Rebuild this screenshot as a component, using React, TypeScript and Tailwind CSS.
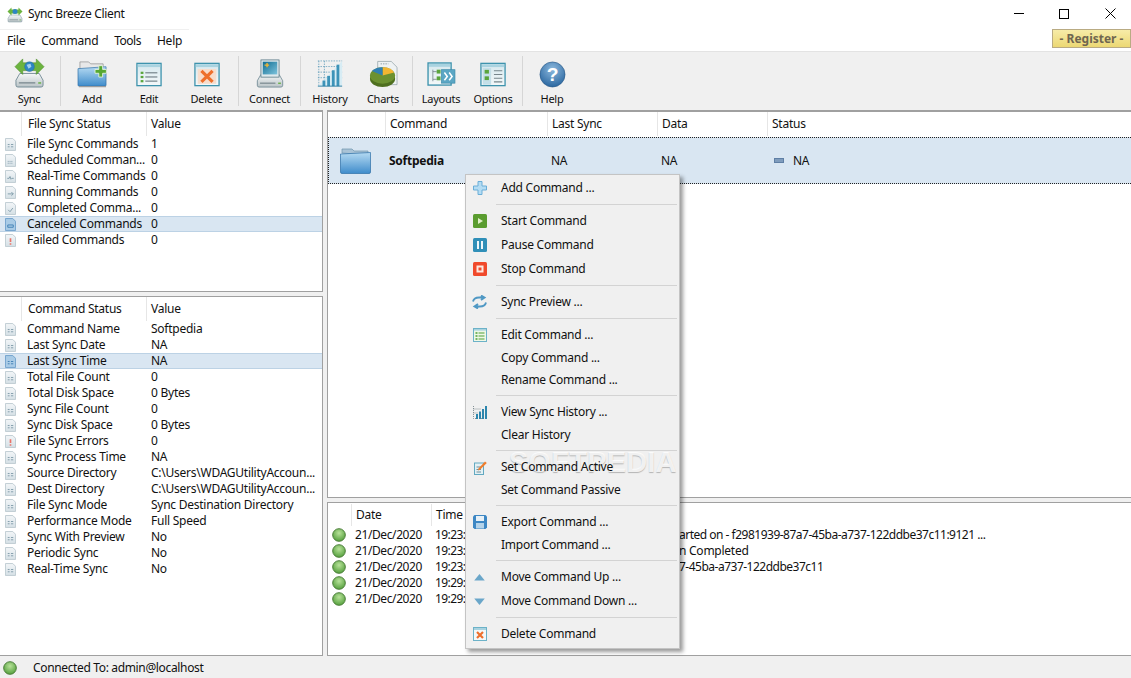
import React from 'react';

const Defs = () => (
  <svg width="0" height="0" className="absolute">
    <defs>
      <linearGradient id="blue" x1="0" y1="0" x2="0" y2="1">
        <stop offset="0" stopColor="#b5daf2" />
        <stop offset="1" stopColor="#3f8ccb" />
      </linearGradient>
      <linearGradient id="drive" x1="0" y1="0" x2="0" y2="1">
        <stop offset="0" stopColor="#f6f8f8" />
        <stop offset="1" stopColor="#b9c3c6" />
      </linearGradient>
      <linearGradient id="win" x1="0" y1="0" x2="0" y2="1">
        <stop offset="0" stopColor="#d5e8ee" />
        <stop offset="1" stopColor="#f4f8f9" />
      </linearGradient>
      <linearGradient id="screen" x1="0" y1="0" x2="1" y2="1">
        <stop offset="0" stopColor="#0f6d92" />
        <stop offset="1" stopColor="#7dc3dc" />
      </linearGradient>
      <linearGradient id="sheet" x1="0" y1="0" x2="0" y2="1">
        <stop offset="0" stopColor="#f3f6f8" />
        <stop offset="1" stopColor="#d5e0e6" />
      </linearGradient>
      <radialGradient id="sphere" cx="0.5" cy="0.3" r="0.8">
        <stop offset="0" stopColor="#8db9de" />
        <stop offset="1" stopColor="#1c5b97" />
      </radialGradient>
      <radialGradient id="led" cx="0.5" cy="0.35" r="0.7">
        <stop offset="0" stopColor="#b8e29a" />
        <stop offset="1" stopColor="#4c9a35" />
      </radialGradient>
    </defs>
  </svg>
);

const Drive = () => (
  <>
    <path d="M6 17 L26 17 L30 24 L30 29 Q30 31 28 31 L4 31 Q2 31 2 29 L2 24 Z" fill="url(#drive)" stroke="#5d7a86" strokeWidth="0.8" />
    <rect x="5" y="26" width="17" height="1.4" fill="#7e8c92" />
    <rect x="25" y="26" width="3" height="1.6" fill="#6eb24d" />
  </>
);

const SyncIcon = () => (
  <svg width="31" height="31" viewBox="0 0 32 32">
    <Drive />
    <path d="M1 10 L9 2 L9 6 L23 6 L23 2 L31 10 L23 18 L23 14 L9 14 L9 18 Z" fill="#6cb43f" stroke="#4f8f2d" strokeWidth="0.6" />
    <circle cx="16" cy="10" r="5" fill="#2e86c4" stroke="#1f6aa3" strokeWidth="0.5" />
    <path d="M13 8 L17 7 L18 10 L15 12 Z" fill="#9fd0ee" />
  </svg>
);

const AddIcon = () => (
  <svg width="31" height="29" viewBox="0 0 32 30">
    <path d="M3 12 L3 3 L12 3 L14 5 L27 5 L27 12 Z" fill="#e8e8e8" stroke="#8a8a8a" strokeWidth="0.7" />
    <path d="M1 10 L30 8 L30 27 Q30 28 29 28 L2 28 Q1 28 1 27 Z" fill="url(#blue)" stroke="#2d6ea6" strokeWidth="0.7" />
    <rect x="2" y="28" width="28" height="1.2" fill="#9a9a9a" />
    <path d="M19 8 L23 8 L23 4 L27 4 L27 8 L31 8 L31 12 L27 12 L27 16 L23 16 L23 12 L19 12 Z" transform="translate(0 3) scale(0.98)" fill="#56a832" stroke="#e9f5df" strokeWidth="0.9" />
  </svg>
);

const WinFrame = ({ children }: { children: React.ReactNode }) => (
  <svg width="26" height="25" viewBox="0 0 28 26" className="mb-[1px]">
    <rect x="1" y="1" width="26" height="24" fill="url(#win)" stroke="#3e93ad" strokeWidth="1.4" />
    <rect x="2" y="2" width="24" height="3" fill="#a9d3e0" />
    {children}
  </svg>
);

const EditIcon = () => (
  <WinFrame>
    <rect x="5" y="10" width="3" height="2.4" fill="#5aa53c" />
    <rect x="5" y="14.5" width="3" height="2.4" fill="#5aa53c" />
    <rect x="5" y="19" width="3" height="2.4" fill="#5aa53c" />
    <rect x="10" y="10.5" width="13" height="1.3" fill="#77868c" />
    <rect x="10" y="15" width="13" height="1.3" fill="#77868c" />
    <rect x="10" y="19.5" width="13" height="1.3" fill="#77868c" />
  </WinFrame>
);

const DeleteIcon = () => (
  <WinFrame>
    <rect x="4" y="7" width="20" height="16" fill="#f7dccb" />
    <path d="M8 9 L20 21 M20 9 L8 21" stroke="#ee6f2c" strokeWidth="3.4" fill="none" />
  </WinFrame>
);

const ConnectIcon = () => (
  <svg width="30" height="29" viewBox="0 0 32 32">
    <Drive />
    <rect x="6" y="1" width="20" height="19" fill="#dfe9ec" stroke="#4d6f7c" strokeWidth="0.8" />
    <rect x="8" y="3" width="16" height="14" fill="url(#screen)" />
    <path d="M10 6 L12 6 L12 4.5 L13.5 4.5 L13.5 6 L15 6 L15 7.5 L13.5 7.5 L13.5 9 L12 9 L12 7.5 L10 7.5 Z" fill="#f2b632" />
  </svg>
);

const HistoryIcon = () => (
  <svg width="28" height="28" viewBox="0 0 28 30">
    <g stroke="#4a8fb0" strokeWidth="0.7" strokeDasharray="1.6 1.2" fill="none">
      <path d="M1 1 L27 1 M1 7 L27 7 M1 13 L27 13 M1 19 L27 19 M2 1 L2 28 M8 1 L8 28" />
    </g>
    <path d="M1 28 L27 1 L27 28 Z" fill="#d7ecf4" />
    <rect x="6" y="22" width="3" height="6" fill="#3d93b8" />
    <rect x="11" y="17" width="3" height="11" fill="#3d93b8" />
    <rect x="16" y="11" width="3" height="17" fill="#3d93b8" />
    <rect x="21" y="5" width="3" height="23" fill="#3d93b8" />
    <path d="M1 28 L27 28" stroke="#2b7ea3" strokeWidth="1" />
  </svg>
);

const ChartsIcon = () => (
  <svg width="29" height="28" viewBox="0 0 30 28">
    <path d="M9 1 L23 1 L29 7 L29 25 L9 25 Z" fill="#eef2f3" stroke="#8a9aa0" strokeWidth="0.7" />
    <path d="M12 3.5 L20 3.5" stroke="#7a8a90" strokeWidth="0.8" strokeDasharray="1.5 1" />
    <ellipse cx="14" cy="19" rx="13" ry="8.5" fill="#4f6f1f" />
    <ellipse cx="14" cy="15.5" rx="13" ry="8.5" fill="#6c9130" />
    <path d="M14 15.5 L14 7 A13 8.5 0 0 1 26 12.5 Z" fill="#f2b632" />
    <path d="M14 15.5 L14 7 A13 8.5 0 0 0 3 11 Z" fill="#2f7fb3" />
  </svg>
);

const LayoutsIcon = () => (
  <svg width="29" height="25" viewBox="0 0 30 26" className="mb-[1px]">
    <rect x="1" y="1" width="24" height="23" fill="url(#win)" stroke="#3e93ad" strokeWidth="1.4" />
    <rect x="2" y="2" width="22" height="3" fill="#a9d3e0" />
    <path d="M6 8 L6 20 M6 10 L10 10 M6 18 L10 18" stroke="#6e7e84" strokeWidth="0.8" fill="none" />
    <rect x="10" y="8" width="4" height="4" fill="#5aa53c" />
    <rect x="10" y="15" width="4" height="4" fill="#5aa53c" />
    <rect x="15" y="8" width="14" height="14" fill="#5ba6c4" stroke="#3a8aa9" strokeWidth="0.7" />
    <path d="M18 11 L21 15 L18 19 M23 11 L26 15 L23 19" stroke="#fff" strokeWidth="1.6" fill="none" />
  </svg>
);

const OptionsIcon = () => (
  <WinFrame>
    <rect x="3" y="6" width="9" height="18" fill="#c4dfe8" />
    <rect x="5" y="8" width="4.6" height="4" fill="#5aa53c" />
    <rect x="5" y="15" width="4.6" height="4" fill="#5aa53c" />
    <path d="M15 9 L24 9 M15 13 L24 13 M15 17 L24 17 M15 21 L24 21" stroke="#77868c" strokeWidth="1.2" />
  </WinFrame>
);

const HelpIcon = () => (
  <svg width="27" height="27" viewBox="0 0 28 28">
    <circle cx="14" cy="14" r="13" fill="url(#sphere)" stroke="#1d4f80" strokeWidth="0.6" />
    <text x="14" y="21" textAnchor="middle" fontSize="20" fontWeight="700" fill="#fff" fontFamily="Liberation Sans, sans-serif">?</text>
  </svg>
);

// row icon: small sheet with a tiny mark in it
const Sheet = ({ mark = 'lines', selected = false }: { mark?: string; selected?: boolean }) => {
  const c = selected ? '#3f7fb5' : '#7f9aa8';
  return (
    <svg width="11" height="13" viewBox="0 0 12 14" className="shrink-0">
      <path d="M0.5 0.5 L8.5 0.5 L11.5 3.5 L11.5 13.5 L0.5 13.5 Z" fill={selected ? '#a9cbe6' : 'url(#sheet)'} stroke={selected ? '#6ea0cb' : '#bcc9d0'} strokeWidth="1" />
      {mark === 'lines' && <path d="M3 7 L5 7 M6.5 7 L9 7 M3 9.5 L5 9.5 M6.5 9.5 L9 9.5" stroke={c} strokeWidth="1" />}
      {mark === 'dots' && <path d="M3 8 L9 8 M3 10 L9 10" stroke={c} strokeWidth="1" strokeDasharray="1 1" />}
      {mark === 'wave' && <path d="M2.5 9 L4.5 9 L5.5 7 L6.5 10 L7.5 9 L9.5 9" stroke={c} strokeWidth="1" fill="none" />}
      {mark === 'arrow' && <path d="M3 8.5 L9 8.5 M7 6.5 L9 8.5 L7 10.5" stroke={c} strokeWidth="1" fill="none" />}
      {mark === 'check' && <path d="M3.5 8.5 L5.5 10.5 L8.5 6.5" stroke={c} strokeWidth="1" fill="none" />}
      {mark === 'loop' && <path d="M3 7.5 L9 7.5 L9 10 L3 10 Z" stroke={c} strokeWidth="1" fill="none" />}
      {mark === 'fail' && <path d="M6 4.5 L6 8.5 M6 10 L6 11.5" stroke="#e8746a" strokeWidth="1.8" />}
    </svg>
  );
};

const Led = () => (
  <svg width="14" height="14" viewBox="0 0 14 14" className="shrink-0">
    <circle cx="7" cy="7" r="6.3" fill="url(#led)" stroke="#4d7f3b" strokeWidth="1" />
  </svg>
);

const statusRows = [
  ['File Sync Commands', '1', 'lines'],
  ['Scheduled Comman...', '0', 'dots'],
  ['Real-Time Commands', '0', 'wave'],
  ['Running Commands', '0', 'arrow'],
  ['Completed Comma...', '0', 'check'],
  ['Canceled Commands', '0', 'loop'],
  ['Failed Commands', '0', 'fail'],
];

const commandRows = [
  ['Command Name', 'Softpedia', 'lines'],
  ['Last Sync Date', 'NA', 'lines'],
  ['Last Sync Time', 'NA', 'lines'],
  ['Total File Count', '0', 'lines'],
  ['Total Disk Space', '0 Bytes', 'lines'],
  ['Sync File Count', '0', 'lines'],
  ['Sync Disk Space', '0 Bytes', 'lines'],
  ['File Sync Errors', '0', 'fail'],
  ['Sync Process Time', 'NA', 'lines'],
  ['Source Directory', 'C:\\Users\\WDAGUtilityAccoun...', 'lines'],
  ['Dest Directory', 'C:\\Users\\WDAGUtilityAccoun...', 'lines'],
  ['File Sync Mode', 'Sync Destination Directory', 'lines'],
  ['Performance Mode', 'Full Speed', 'lines'],
  ['Sync With Preview', 'No', 'lines'],
  ['Periodic Sync', 'No', 'lines'],
  ['Real-Time Sync', 'No', 'lines'],
];

const StatusTable = ({ title, rows, selected, headerPad }: { title: string; rows: string[][]; selected: number; headerPad: string }) => (
  <>
    <div className="flex h-[24px] bg-white">
      <div className="w-[22px] border-r border-[#e6e6e6]" />
      <div className={`w-[125px] pl-[6px] border-r border-[#e6e6e6] flex items-center ${headerPad}`}>{title}</div>
      <div className={`pl-[4px] flex items-center ${headerPad}`}>Value</div>
    </div>
    {rows.map((r, i) => (
      <div key={r[0]} className={`flex items-center h-[16px] ${i === selected ? 'bg-[#d9e6f2] shadow-[inset_0_1px_0_#bcd2e5,inset_0_-1px_0_#bcd2e5]' : ''}`}>
        <div className="w-[27px] pl-[5px] flex items-center"><Sheet mark={r[2]} selected={i === selected} /></div>
        <div className="w-[124px] whitespace-nowrap overflow-hidden">{r[0]}</div>
        <div className="flex-1 whitespace-nowrap overflow-hidden">{r[1]}</div>
      </div>
    ))}
  </>
);

const tools = [
  { label: 'Sync', w: 'w-[58px]', icon: <SyncIcon />, sep: 'ml-[2px]' },
  { label: 'Add', w: 'w-[62px]', icon: <AddIcon /> },
  { label: 'Edit', w: 'w-[52px]', icon: <EditIcon /> },
  { label: 'Delete', w: 'w-[63px]', icon: <DeleteIcon />, sep: 'ml-0' },
  { label: 'Connect', w: 'w-[61px]', icon: <ConnectIcon />, sep: 'ml-0' },
  { label: 'History', w: 'w-[58px]', icon: <HistoryIcon /> },
  { label: 'Charts', w: 'w-[48px]', icon: <ChartsIcon />, sep: 'ml-[5px]' },
  { label: 'Layouts', w: 'w-[56px]', icon: <LayoutsIcon /> },
  { label: 'Options', w: 'w-[48px]', icon: <OptionsIcon />, sep: 'ml-[5px]' },
  { label: 'Help', w: 'w-[58px]', icon: <HelpIcon /> },
];

const MenuPlus = () => (
  <svg width="14" height="14" viewBox="0 0 14 14"><path d="M5 0.5 L9 0.5 L9 5 L13.5 5 L13.5 9 L9 9 L9 13.5 L5 13.5 L5 9 L0.5 9 L0.5 5 L5 5 Z" fill="#b4dcf3" stroke="#6aaed8" /></svg>
);
const MenuBox = ({ bg, children }: { bg: string; children: React.ReactNode }) => (
  <svg width="14" height="14" viewBox="0 0 14 14"><rect width="14" height="14" rx="1.5" fill={bg} />{children}</svg>
);
const MenuSync = () => (
  <svg width="15" height="14" viewBox="0 0 15 14" fill="none" stroke="#4f98c4" strokeWidth="1.9">
    <path d="M1 6.5 Q2 2.5 7 2.5 L11 2.5 M9 0.5 L12.5 2.5 L9 5" />
    <path d="M14 7.5 Q13 11.5 8 11.5 L4 11.5 M6 9 L2.5 11.5 L6 13.5" />
  </svg>
);
const MenuEdit = () => (
  <svg width="14" height="14" viewBox="0 0 14 14">
    <rect x="0.5" y="0.5" width="13" height="13" fill="#eff8e6" stroke="#6cb2c8" />
    <rect x="1" y="1" width="12" height="1.6" fill="#a9d3e0" />
    <path d="M2.5 5 L4.5 5 M2.5 8 L4.5 8 M2.5 11 L4.5 11" stroke="#4f9f36" strokeWidth="1.6" />
    <path d="M5.5 5 L11.5 5 M5.5 8 L11.5 8 M5.5 11 L11.5 11" stroke="#4f9f36" strokeWidth="1" />
  </svg>
);
const MenuBars = () => (
  <svg width="14" height="14" viewBox="0 0 14 14">
    <path d="M0.5 1 L0.5 13.5 L13.5 13.5 M0.5 4 L8 4 M0.5 8 L5 8" stroke="#6a7a80" strokeWidth="0.8" strokeDasharray="1 1" fill="none" />
    <rect x="3" y="9" width="2" height="5" fill="#2d86ad" />
    <rect x="6" y="6.5" width="2" height="7.5" fill="#2d86ad" />
    <rect x="9" y="4" width="2" height="10" fill="#2d86ad" />
    <rect x="12" y="1" width="2" height="13" fill="#2d86ad" />
  </svg>
);
const MenuActive = () => (
  <svg width="14" height="15" viewBox="0 0 14 15">
    <rect x="1.5" y="3" width="9" height="11.5" fill="#e3f0f4" stroke="#62a9c1" />
    <path d="M3.5 7 L8 7 M3.5 9.5 L8 9.5 M3.5 12 L8 12" stroke="#6e8f9b" />
    <path d="M5.5 8.5 L12 1.5 L13.8 3 L7 9.8 L5 10.5 Z" fill="#ef7d2d" />
  </svg>
);
const MenuSave = () => (
  <svg width="14" height="14" viewBox="0 0 14 14">
    <path d="M1.5 0 L12.5 0 L14 1.5 L14 12.5 L12.5 14 L1.5 14 L0 12.5 L0 1.5 Z" fill="#3d87c4" />
    <rect x="3" y="1" width="8" height="5" fill="#e8f1f7" />
    <rect x="3" y="8" width="8" height="5.5" fill="#b4d3ea" />
  </svg>
);
const MenuUp = () => (
  <svg width="11" height="7" viewBox="0 0 12 8"><path d="M6 0 L12 7.5 L0 7.5 Z" fill="#6aa6c9" /></svg>
);
const MenuDown = () => (
  <svg width="11" height="7" viewBox="0 0 12 8"><path d="M6 8 L12 0.5 L0 0.5 Z" fill="#6aa6c9" /></svg>
);
const MenuDelete = () => (
  <svg width="14" height="14" viewBox="0 0 14 14">
    <rect x="0.5" y="0.5" width="13" height="13" fill="#f4f8f9" stroke="#6cb2c8" />
    <rect x="1" y="1" width="12" height="2" fill="#a9d3e0" />
    <path d="M4 5 L10 11 M10 5 L4 11" stroke="#ee6f2c" strokeWidth="2.2" />
  </svg>
);

const menu: ({ label: string; icon?: React.ReactNode } | null)[] = [
  { label: 'Add Command ...', icon: <MenuPlus /> },
  null,
  { label: 'Start Command', icon: <MenuBox bg="#5a9c2f"><path d="M5 4 L10 7 L5 10 Z" fill="#dff0c8" /></MenuBox> },
  { label: 'Pause Command', icon: <MenuBox bg="#2f8fb8"><path d="M4 3 L6 3 L6 11 L4 11 Z M8 3 L10 3 L10 11 L8 11 Z" fill="#eef7fb" /></MenuBox> },
  { label: 'Stop Command', icon: <MenuBox bg="#f0492b"><path d="M3.5 3.5 L10.5 3.5 L10.5 10.5 L3.5 10.5 Z M5.5 5.5 L5.5 8.5 L8.5 8.5 L8.5 5.5 Z" fill="#fde8e0" fillRule="evenodd" /></MenuBox> },
  null,
  { label: 'Sync Preview ...', icon: <MenuSync /> },
  null,
  { label: 'Edit Command ...', icon: <MenuEdit /> },
  { label: 'Copy Command ...' },
  { label: 'Rename Command ...' },
  null,
  { label: 'View Sync History ...', icon: <MenuBars /> },
  { label: 'Clear History' },
  null,
  { label: 'Set Command Active', icon: <MenuActive /> },
  { label: 'Set Command Passive' },
  null,
  { label: 'Export Command ...', icon: <MenuSave /> },
  { label: 'Import Command ...' },
  null,
  { label: 'Move Command Up ...', icon: <MenuUp /> },
  { label: 'Move Command Down ...', icon: <MenuDown /> },
  null,
  { label: 'Delete Command', icon: <MenuDelete /> },
];

const logRows = [
  ['21/Dec/2020', '19:23:', 'arted on - f2981939-87a7-45ba-a737-122ddbe37c11:9121 ...'],
  ['21/Dec/2020', '19:23:', 'n Completed'],
  ['21/Dec/2020', '19:23:', '7-45ba-a737-122ddbe37c11'],
  ['21/Dec/2020', '19:29:', ''],
  ['21/Dec/2020', '19:29:', ''],
];

const App: React.FC = () => {
  return (
    <div className="relative w-[1131px] h-[678px] overflow-hidden flex flex-col bg-[#f0f0f0] text-[12px] leading-[16px] text-[#111] font-['Noto_Sans','Open_Sans',sans-serif] tracking-[-0.25px]">
      <Defs />
      {/* title bar */}
      <div className="h-[29px] bg-white flex items-center shrink-0">
        <div className="ml-[7px] w-[16px] h-[18px] flex items-center">
          <svg width="16" height="17" viewBox="0 0 32 32"><Drive /><path d="M1 10 L9 2 L9 6 L23 6 L23 2 L31 10 L23 18 L23 14 L9 14 L9 18 Z" fill="#6cb43f" /><circle cx="16" cy="10" r="5" fill="#2e86c4" /></svg>
        </div>
        <span className="ml-[5px] tracking-[-0.35px] mb-[1px]">Sync Breeze Client</span>
        <div className="ml-auto flex items-center pb-[2px]">
          <div className="w-[45px] h-[27px] flex items-center justify-center"><div className="w-[10px] h-px bg-black" /></div>
          <div className="w-[46px] h-[27px] flex items-center justify-center"><div className="w-[10px] h-[10px] border border-black" /></div>
          <div className="w-[44px] pl-[2px] h-[27px] flex items-center justify-center">
            <svg width="11" height="11" viewBox="0 0 11 11"><path d="M0.5 0.5 L10.5 10.5 M10.5 0.5 L0.5 10.5" stroke="#000" strokeWidth="1" /></svg>
          </div>
        </div>
      </div>
      {/* menu bar */}
      <div className="h-[22px] bg-white flex shrink-0 relative">
        <div className="w-[189px] flex items-center pl-[7px] gap-[16px] border-t border-[#f0f0f0]">
          <span>File</span>
          <span>Command</span>
          <span className="tracking-[-0.5px]">Tools</span>
          <span>Help</span>
        </div>
        <div className="ml-auto mb-[3px] w-[79px] flex items-center justify-center bg-gradient-to-b from-[#f7eca8] to-[#ecd873] border border-[#b9ab83] font-bold text-[#6f6650] tracking-normal">
          - Register -
        </div>
      </div>
      {/* toolbar */}
      <div className="h-[59px] border-t border-[#e3e3e3] flex shrink-0 pt-[4px]">
        {tools.map((t) => (
          <React.Fragment key={t.label}>
            <div className={`${t.w} h-[51px] flex flex-col items-center shrink-0`}>
              <div className="h-[32px] shrink-0 flex items-end justify-center">{t.icon}</div>
              <div className="mt-[3px] text-[11px]">{t.label}</div>
            </div>
            {t.sep && <div className={`${t.sep} w-px h-[50px] bg-[#d6d6d6] shrink-0`} />}
          </React.Fragment>
        ))}
      </div>
      {/* panes */}
      <div className="flex-1 flex min-h-0">
        <div className="w-[323px] flex flex-col gap-[4px]">
          <div className="h-[182px] bg-white border-t-2 border-r border-b border-[#a0a0a0]">
            <StatusTable title="File Sync Status" rows={statusRows} selected={5} headerPad="pb-[1px]" />
          </div>
          <div className="flex-1 bg-white border-t border-r border-b border-[#a0a0a0]">
            <StatusTable title="Command Status" rows={commandRows} selected={2} headerPad="pb-0" />
          </div>
        </div>
        <div className="ml-[4px] flex-1 flex flex-col gap-[4px]">
          <div className="h-[388px] bg-white border-t-2 border-l border-b border-[#a0a0a0]">
            <div className="h-[25px] flex">
              <div className="w-[58px] mb-[1px] border-r border-[#e6e6e6]" />
              <div className="w-[162px] pl-[4px] pb-[1px] flex items-center mb-[1px] border-r border-[#e6e6e6]">Command</div>
              <div className="w-[110px] pl-[4px] pb-[1px] flex items-center mb-[1px] border-r border-[#e6e6e6]">Last Sync</div>
              <div className="w-[110px] pl-[4px] pb-[1px] flex items-center mb-[1px] border-r border-[#e6e6e6]">Data</div>
              <div className="pl-[4px] pb-[2px] flex items-center">Status</div>
            </div>
            <div className="h-[47px] flex items-center bg-[#d9e6f2] border-y border-l border-dotted border-[#222]">
              <div className="w-[60px] pl-[11px] flex items-center">
                <svg width="31" height="27" viewBox="0 0 31 27">
                  <path d="M2 6 L2 2 L12 2 L14 4 L28 4 L28 8 Z" fill="#a9c3d6" stroke="#6f94ae" strokeWidth="0.7" />
                  <path d="M0.5 7 L30.5 5.5 L30.5 25 Q30.5 26.5 29 26.5 L2 26.5 Q0.5 26.5 0.5 25 Z" fill="url(#blue)" stroke="#2d6ea6" strokeWidth="0.7" />
                </svg>
              </div>
              <div className="w-[162px] font-bold">Softpedia</div>
              <div className="w-[110px]">NA</div>
              <div className="w-[113px]">NA</div>
              <div className="w-[10px] h-[5px] bg-[#7f9cbd] border border-[#5f7fa5]" />
              <div className="ml-[9px]">NA</div>
            </div>
          </div>
          <div className="flex-1 bg-white border-t border-l border-b border-[#a0a0a0]">
            <div className="h-[24px] flex">
              <div className="w-[24px] my-[1px] border-r border-[#e6e6e6]" />
              <div className="w-[80px] pl-[4px] flex items-center my-[1px] border-r border-[#e6e6e6]">Date</div>
              <div className="pl-[4px] flex items-center">Time</div>
            </div>
            {logRows.map((r, i) => (
              <div key={i} className="h-[16px] flex items-center whitespace-nowrap">
                <div className="w-[27px] pl-[4px] flex items-center"><Led /></div>
                <div className="w-[80px] tracking-[-0.4px]">{r[0]}</div>
                <div className="w-[244px] tracking-[-0.6px]">{r[1]}</div>
                <div className={r[2].includes('-') ? 'tracking-[-0.5px]' : ''}>{r[2]}</div>
              </div>
            ))}
          </div>
        </div>
      </div>
      {/* status bar */}
      <div className="h-[22px] flex items-center shrink-0 pl-[3px] pt-[2px]">
        <Led />
        <span className="ml-[16px] mb-[1px] tracking-[-0.35px]">Connected To: admin@localhost</span>
      </div>
      {/* context menu */}
      <div className="absolute left-[465px] top-[174px] w-[215px] h-[475px] bg-[#f0f0f0] border border-[#c4c4c4] pt-[1px] shadow-[3px_3px_4px_rgba(0,0,0,0.4)]">
        {menu.map((m, i) =>
          m === null ? (
            <div key={i} className="h-[9px] flex items-center pl-[30px] pr-[2px]"><div className="w-full h-px bg-[#d3d3d3]" /></div>
          ) : (
            <div key={m.label} className={`flex items-center ${m.icon ? 'h-[24px]' : 'h-[22px]'}`}>
              <div className="w-[35px] flex items-center"><div className="w-[27px] flex items-center justify-center">{m.icon}</div></div>
              <span className="relative z-10">{m.label}</span>
            </div>
          ),
        )}
      </div>
      {/* watermark */}
      <div className="absolute left-[509px] top-[444px] text-[29px] leading-[36px] font-bold tracking-[0.2px] text-white/80 [text-shadow:0_1px_1px_rgba(0,0,0,0.25)] font-['Liberation_Sans',sans-serif] pointer-events-none">SOFTPEDIA</div>
    </div>
  );
};

export default App;
